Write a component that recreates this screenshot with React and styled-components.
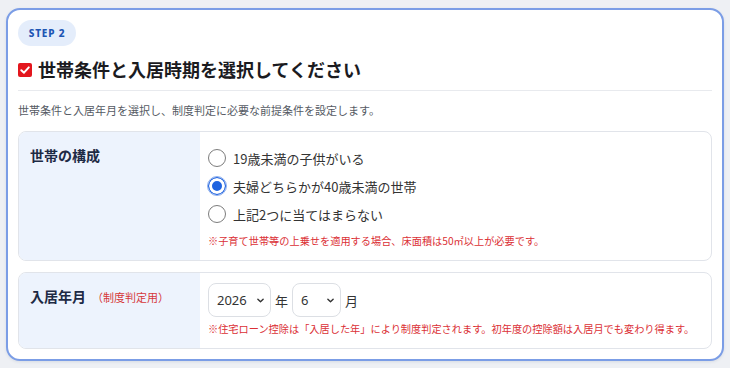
import React, { useState } from "react";
import styled, { createGlobalStyle } from "styled-components";

const GlobalStyle = createGlobalStyle`
  body {
    margin: 0;
    background: #eef0f4;
    font-family: "Noto Sans CJK JP", "Noto Sans", sans-serif;
  }
`;

const HOUSEHOLD = [
  { id: "child", label: "19歳未満の子供がいる" },
  { id: "young", label: "夫婦どちらかが40歳未満の世帯" },
  { id: "none", label: "上記2つに当てはまらない" },
];

export default function App() {
  const [household, setHousehold] = useState("young");
  const [year, setYear] = useState("2026");
  const [month, setMonth] = useState("6");

  return (
    <>
      <GlobalStyle />
      <Page>
        <Card>
          <Badge>STEP 2</Badge>
          <TitleRow>
            <CheckIcon viewBox="0 0 14 14">
              <rect width="14" height="14" rx="2" fill="#e3161d" />
              <path d="M3.3 7.2 L6 9.7 L10.8 4.4" fill="none" stroke="#fff" strokeWidth="2" strokeLinecap="round" strokeLinejoin="round" />
            </CheckIcon>
            <Title>世帯条件と入居時期を選択してください</Title>
          </TitleRow>
          <Description>世帯条件と入居年月を選択し、制度判定に必要な前提条件を設定します。</Description>

          <Section>
            <LabelCell>
              <Label>世帯の構成</Label>
            </LabelCell>
            <FieldCell>
              <RadioList>
                {HOUSEHOLD.map((h) => (
                  <RadioRow key={h.id}>
                    <Radio
                      type="radio"
                      name="household"
                      checked={household === h.id}
                      onChange={() => setHousehold(h.id)}
                    />
                    {h.label}
                  </RadioRow>
                ))}
              </RadioList>
              <Note $top={5}>※子育て世帯等の上乗せを適用する場合、床面積は50㎡以上が必要です。</Note>
            </FieldCell>
          </Section>

          <Section>
            <LabelCell>
              <Label>
                入居年月<SubLabel>（制度判定用）</SubLabel>
              </Label>
            </LabelCell>
            <FieldCell $pad={10}>
              <DateRow>
                <SelectWrap $w={63}>
                  <Select value={year} onChange={(e) => setYear(e.target.value)}>
                    {["2024", "2025", "2026", "2027", "2028"].map((y) => (
                      <option key={y}>{y}</option>
                    ))}
                  </Select>
                  <Chevron viewBox="0 0 8 5">
                    <path d="M1 1 L4 4 L7 1" fill="none" stroke="#333" strokeWidth="1.6" strokeLinecap="round" strokeLinejoin="round" />
                  </Chevron>
                </SelectWrap>
                <Unit>年</Unit>
                <SelectWrap $w={49}>
                  <Select value={month} onChange={(e) => setMonth(e.target.value)}>
                    {Array.from({ length: 12 }, (_, i) => String(i + 1)).map((m) => (
                      <option key={m}>{m}</option>
                    ))}
                  </Select>
                  <Chevron viewBox="0 0 8 5">
                    <path d="M1 1 L4 4 L7 1" fill="none" stroke="#333" strokeWidth="1.6" strokeLinecap="round" strokeLinejoin="round" />
                  </Chevron>
                </SelectWrap>
                <Unit>月</Unit>
              </DateRow>
              <Note $top={4}>※住宅ローン控除は「入居した年」により制度判定されます。初年度の控除額は入居月でも変わり得ます。</Note>
            </FieldCell>
          </Section>
        </Card>
      </Page>
    </>
  );
}

const Page = styled.div`
  padding: 8px 6px 7px 6px;
`;

const Card = styled.div`
  background: #fff;
  border: 2px solid #7b9de6;
  border-radius: 14px;
  padding: 10px 10px 10px 10px;
  display: flex;
  flex-direction: column;
  box-shadow: 0 1px 3px rgba(60, 80, 120, 0.12);
`;

const Badge = styled.div`
  align-self: flex-start;
  height: 26px;
  width: 58px;
  box-sizing: border-box;
  border-radius: 13px;
  background: #e4edfb;
  color: #1d56b4;
  font-family: "Noto Sans", "Open Sans", sans-serif;
  font-weight: 800;
  font-size: 10px;
  letter-spacing: 0.8px;
  display: flex;
  align-items: center;
  justify-content: center;
`;

const TitleRow = styled.div`
  display: flex;
  align-items: center;
  gap: 6px;
  margin-top: 11px;
  padding-bottom: 8px;
  border-bottom: 1px solid #e8eaee;
`;

const CheckIcon = styled.svg`
  width: 14px;
  height: 14px;
  flex: none;
`;

const Title = styled.h2`
  margin: 0;
  font-size: 18px;
  line-height: 25px;
  font-weight: 700;
  color: #1b1b1f;
`;

const Description = styled.p`
  margin: 11px 0 13px 0;
  font-size: 11px;
  line-height: 16px;
  color: #555a63;
`;

const Section = styled.div`
  display: grid;
  grid-template-columns: 181px 1fr;
  border: 1px solid #e1e4ea;
  border-radius: 8px;
  overflow: hidden;
  & + & {
    margin-top: 11px;
  }
`;

const LabelCell = styled.div`
  background: #edf3fd;
  padding: 13px 11px;
`;

const Label = styled.div`
  font-size: 14px;
  line-height: 20px;
  font-weight: 700;
  color: #1e2a44;
  display: flex;
  align-items: baseline;
`;

const SubLabel = styled.span`
  font-size: 11px;
  font-weight: 400;
  color: #d6373a;
  margin-left: 6px;
`;

const FieldCell = styled.div`
  padding: ${(p) => p.$pad ?? 12}px 12px 11px 8px;
`;

const RadioList = styled.div`
  display: flex;
  flex-direction: column;
`;

const RadioRow = styled.label`
  display: flex;
  align-items: center;
  gap: 7px;
  height: 28px;
  font-size: 13px;
  color: #333;
  cursor: pointer;
`;

const Radio = styled.input`
  appearance: none;
  margin: 0;
  width: 18px;
  height: 18px;
  border-radius: 50%;
  border: 1px solid #7c7c7c;
  background: #fff;
  box-sizing: border-box;
  flex: none;
  &:checked {
    border: 1px solid #1f63e0;
    background: #1f63e0;
    box-shadow: inset 0 0 0 3px #fff;
    outline: 1px solid #8fb0ee;
  }
`;

const Note = styled.p`
  margin: ${(p) => p.$top}px 0 0 0;
  font-size: 10.2px;
  line-height: 16px;
  color: #db3035;
`;

const DateRow = styled.div`
  display: flex;
  align-items: center;
  gap: 4px;
  font-size: 13px;
  color: #333;
`;

const SelectWrap = styled.span`
  position: relative;
  display: inline-flex;
  width: ${(p) => p.$w}px;
`;

const Select = styled.select`
  appearance: none;
  width: 100%;
  height: 34px;
  border: 1px solid #dcdfe4;
  border-radius: 8px;
  background: #fff;
  padding: 0 0 0 8px;
  font-family: "Noto Sans", "Open Sans", sans-serif;
  font-size: 13px;
  color: #333;
`;

const Chevron = styled.svg`
  position: absolute;
  right: 7px;
  top: 15px;
  width: 7px;
  height: 5px;
  pointer-events: none;
`;

const Unit = styled.span`
  font-size: 13px;
  color: #333;
`;
